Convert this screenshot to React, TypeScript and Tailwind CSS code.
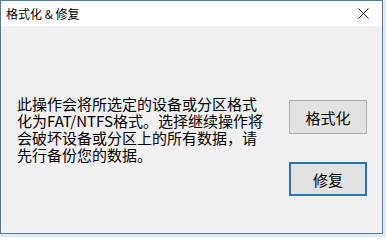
import React from "react";

const font = { fontFamily: '"Noto Sans CJK SC", "Noto Sans", sans-serif' };

export default function App() {
  return (
    <div className="w-[386px] h-[237px] bg-[#dde9f4] overflow-hidden" style={font}>
      <div className="w-[383px] h-[234px] border border-[#58799a] flex flex-col bg-[#f0f0f0]">
        <div className="h-[25px] bg-white flex items-center justify-between pl-[5px] pr-[8px]">
          <span className="text-[12px] leading-none text-black whitespace-nowrap">格式化 &amp; 修复</span>
          <svg width="11" height="11" viewBox="0 0 11 11" className="mr-[5px]">
            <path d="M0.5 0.5 L10.5 10.5 M10.5 0.5 L0.5 10.5" stroke="#111" strokeWidth="1" fill="none" />
          </svg>
        </div>
        <div className="flex-1 flex flex-row">
          <div className="w-[288px] pl-[16px] pt-[69px] text-[15px] leading-[17px] text-black">
            <div className="whitespace-nowrap">此操作会将所选定的设备或分区格式</div>
            <div className="whitespace-nowrap">化为FAT/NTFS格式。选择继续操作将</div>
            <div className="whitespace-nowrap">会破坏设备或分区上的所有数据，请</div>
            <div className="whitespace-nowrap">先行备份您的数据。</div>
          </div>
          <div className="flex flex-col pt-[74px] gap-[28px]">
            <button className="w-[78px] h-[34px] bg-[#e1e1e1] border border-[#adadad] text-[15px] text-black leading-none">
              格式化
            </button>
            <button className="w-[78px] h-[34px] bg-[#e1e1e1] border-2 border-[#2a75b8] text-[15px] text-black leading-none">
              修复
            </button>
          </div>
        </div>
      </div>
    </div>
  );
}
